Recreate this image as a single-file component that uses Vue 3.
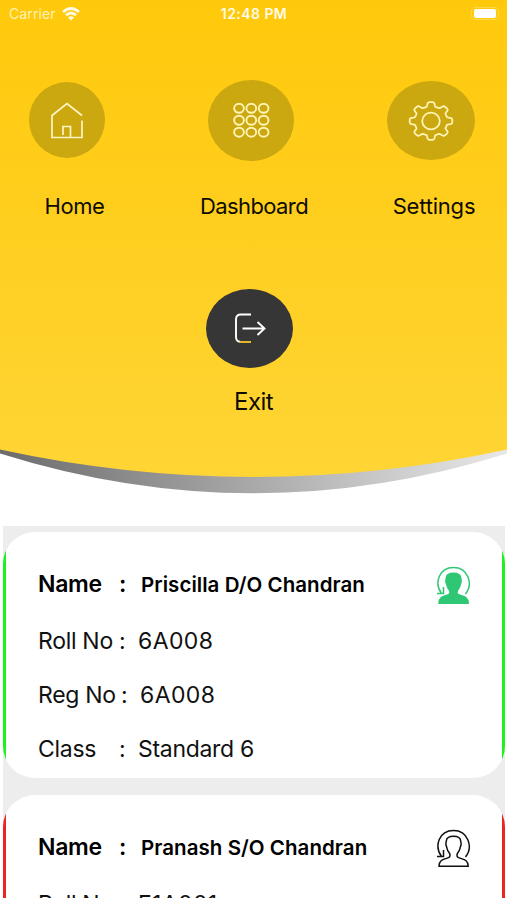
<script setup>
const students = [
  { name: 'Priscilla D/O Chandran', roll: '6A008', reg: '6A008', cls: 'Standard 6', present: true },
  { name: 'Pranash S/O Chandran', roll: 'F1A001', reg: 'F1A001', cls: 'Form 1', present: false },
]
const dots = [6, 18.3, 30.6]
const gear = (() => {
  const pts = []
  for (let i = 0; i <= 240; i++) {
    const a = (i / 240) * Math.PI * 2
    const wave = Math.tanh(2.6 * Math.cos(8 * a)) / Math.tanh(2.6)
    const r = 17.8 + 2.3 * wave
    pts.push(`${(23 + r * 1.06 * Math.sin(a)).toFixed(2)} ${(21 - r * 0.94 * Math.cos(a)).toFixed(2)}`)
  }
  return `M${pts.join('L')}Z`
})()
</script>

<template>
  <main class="screen">
    <header class="hero">
      <svg class="backdrop" viewBox="0 0 507 500" aria-hidden="true">
        <defs>
          <linearGradient id="sun" x1="0" y1="0" x2="0" y2="1">
            <stop offset="0" stop-color="#ffc90b" />
            <stop offset="1" stop-color="#ffd535" />
          </linearGradient>
          <linearGradient id="steel">
            <stop offset="0" stop-color="#6c6c6c" />
            <stop offset="0.5" stop-color="#a9a9a9" />
            <stop offset="1" stop-color="#e8e8e8" />
          </linearGradient>
        </defs>
        <path d="M0 440V453.500Q253.500 533 507 453.500V440Z" fill="url(#steel)" />
        <path d="M0 0V449.500Q253.500 504.500 507 449.500V0Z" fill="url(#sun)" />
      </svg>

      <div class="status">
        <span class="carrier">Carrier
          <svg width="18" height="14" viewBox="0 0 18 14" fill="none" stroke="#fffbe6" stroke-width="2.7">
            <path d="M1 5Q9-2 17 5M4 8.300Q9 3.700 14 8.300" />
            <path d="M6 10.500Q9 8 12 10.500L9 13.500Z" fill="#fffbe6" stroke="none" />
          </svg>
        </span>
        <span class="clock">12:48 PM</span>
        <span class="battery"><i></i></span>
      </div>

      <nav class="menu">
        <a class="item home">
          <span class="disc">
            <svg width="34" height="38" viewBox="0 0 34 38" fill="none" stroke="#fff6c4" stroke-width="1.7">
              <path d="M32 14.500L17 2.500L2 14.500V36.500H32V19.500M13 34V25.500H20.500V36.500" />
            </svg>
          </span>
          <span class="label">Home</span>
        </a>
        <a class="item dashboard">
          <span class="disc">
            <svg width="37" height="36" viewBox="0 0 37 36" fill="none" stroke="#fff3b5" stroke-width="1.9">
              <template v-for="y in dots" :key="y">
                <ellipse v-for="x in dots" :key="x" :cx="x" :cy="y - 0.5 - y * 0.03" rx="4.900" ry="4.500" />
              </template>
            </svg>
          </span>
          <span class="label">Dashboard</span>
        </a>
        <a class="item settings">
          <span class="disc">
            <svg width="46" height="42" viewBox="0 0 46 42" fill="none" stroke="#fff3b5" stroke-width="1.8" stroke-linejoin="round">
              <path :d="gear" />
              <ellipse cx="23" cy="21" rx="8.800" ry="8.300" />
            </svg>
          </span>
          <span class="label">Settings</span>
        </a>
      </nav>

      <a class="item exit">
        <span class="disc">
          <svg width="32" height="31" viewBox="0 0 32 31" fill="none" stroke="#fff" stroke-width="1.900">
            <path d="M17 1.500H7Q2 1.500 2 6.500V24Q2 28.500 6 28.700" />
            <path d="M5.500 28.600L7 29H17" stroke="#e5b52c" />
            <path d="M8.500 15.500H30M23.500 9L30.500 15.500L23.500 22" />
          </svg>
        </span>
        <span class="label">Exit</span>
      </a>
    </header>

    <section class="list">
      <article v-for="s in students" :key="s.name" class="card" :class="s.present ? 'present' : 'absent'">
        <div class="row title">
          <span class="key">Name</span><span class="colon">:</span><span class="value">{{ s.name }}</span>
          <svg class="person" width="35" height="39" viewBox="0 0 35 39" fill="none" stroke="currentColor" stroke-width="1.500">
            <path d="M5.500 27.500C-2 17 3 1.500 17.500 1.500C32 1.500 37.500 18 29.500 28M1 27.500H7.500V21" />
            <path
              class="figure"
              d="M3 37.200H32.200C32.200 29.500 25.500 30.500 21.700 28.200C20.300 26.500 21 24.500 22.600 22.500C24 21 23.800 19 24.500 17.500C25.800 15.500 24.900 14 24.700 12C24.500 8.500 21.500 7.200 17.500 7.200C13.500 7.200 10.500 8.500 10.300 12C10.100 14 9.200 15.500 10.500 17.500C11.200 19 11 21 12.400 22.500C14 24.500 14.700 26.500 13.300 28.200C9.500 30.500 3 29.500 3 37.200Z"
            />
          </svg>
        </div>
        <div class="row roll"><span class="key">Roll No</span><span class="colon">:</span><span class="value">{{ s.roll }}</span></div>
        <div class="row reg"><span class="key">Reg No</span><span class="colon">:</span><span class="value">{{ s.reg }}</span></div>
        <div class="row class"><span class="key">Class</span><span class="colon">:</span><span class="value">{{ s.cls }}</span></div>
      </article>
    </section>
  </main>
</template>

<style>
body {
  background: #fff;
}
</style>

<style scoped>
.screen {
  width: 507px;
  height: 900px;
  overflow: hidden;
  font-family: Inter, Roboto, sans-serif;
  color: #111;
}
.hero {
  position: relative;
  z-index: 0;
  height: 526px;
}
.backdrop {
  position: absolute;
  top: 0;
  left: 0;
  z-index: -1;
  width: 507px;
  height: 500px;
}
.status {
  display: grid;
  grid-template-columns: 1fr auto 1fr;
  align-items: center;
  height: 27px;
  padding: 0 8px 0 9px;
  color: #fffbe6;
  font-size: 14px;
}
.carrier {
  display: flex;
  align-items: center;
  gap: 6px;
  letter-spacing: 0.1px;
  color: #fff3b5;
}
.clock {
  font-weight: 600;
  letter-spacing: 0.45px;
}
.battery {
  justify-self: end;
  box-sizing: border-box;
  width: 28px;
  height: 13px;
  padding: 1px 2px;
  border: 1px solid #ffd748;
  border-radius: 4px;
}
.battery i {
  display: block;
  height: 9px;
  border-radius: 2px;
  background: #fff;
}
.menu {
  display: flex;
  justify-content: space-between;
  height: 261px;
  padding: 53px 32px 0 29px;
  box-sizing: border-box;
}
.item {
  display: flex;
  flex-direction: column;
  align-items: center;
}
.disc {
  display: flex;
  align-items: center;
  justify-content: center;
  border-radius: 50%;
  background: #cba710;
}
.label {
  font-size: 22px;
  line-height: 28px;
  white-space: nowrap;
  letter-spacing: -0.4px;
  color: #0d0b02;
}
.home {
  width: 76px;
  padding-top: 2px;
}
.home .disc {
  width: 76px;
  height: 76px;
}
.home .label {
  margin: 34px 0 0 15px;
}
.dashboard {
  width: 86px;
  margin-left: 10px;
}
.dashboard .disc {
  width: 86px;
  height: 81px;
}
.dashboard .label {
  margin: 31px 0 0 6px;
  letter-spacing: -0.6px;
}
.settings {
  width: 88px;
  padding-top: 1px;
}
.settings .disc {
  width: 88px;
  height: 79px;
}
.settings .label {
  margin: 32px 0 0 6px;
  letter-spacing: -0.2px;
}
.exit {
  padding: 1px 8px 0 0;
}
.exit .disc {
  width: 87px;
  height: 79px;
  background: #363636;
}
.exit .label {
  margin: 20px 0 0 8px;
  font-size: 24px;
  letter-spacing: -0.6px;
}
.list {
  display: flex;
  flex-direction: column;
  gap: 17px;
  box-sizing: border-box;
  width: 502px;
  height: 371.500px;
  margin-left: 3px;
  padding-top: 6px;
  overflow: hidden;
  background: #ededed;
}
.card {
  flex: none;
  box-sizing: border-box;
  height: 246px;
  padding: 32px 35px 0;
  border-radius: 32px;
  background: linear-gradient(to right, var(--edge) 3px, #fff 3px calc(100% - 3px), var(--edge) calc(100% - 3px));
}
.present {
  --edge: #1df21d;
}
.absent {
  --edge: #ee2424;
}
.row {
  display: flex;
  align-items: center;
  height: 54px;
  font-size: 23px;
  letter-spacing: -0.3px;
}
.title {
  height: 41px;
  margin-bottom: 9px;
  font-weight: 600;
  align-items: flex-start;
  line-height: 40px;
  color: #000;
}
.key {
  width: 81px;
  white-space: nowrap;
}
.colon {
  width: 19px;
}
.title .colon {
  width: 22px;
}
.reg .key {
  width: 83px;
}
.roll .value,
.reg .value {
  letter-spacing: 0.4px;
}
.title .value {
  font-size: 20.5px;
  line-height: 41px;
  letter-spacing: 0.05px;
}
.person {
  margin: 2px -1px 0 auto;
  color: #111;
}
.present .person {
  color: #2fc774;
}
.present .figure {
  fill: currentColor;
}
</style>
